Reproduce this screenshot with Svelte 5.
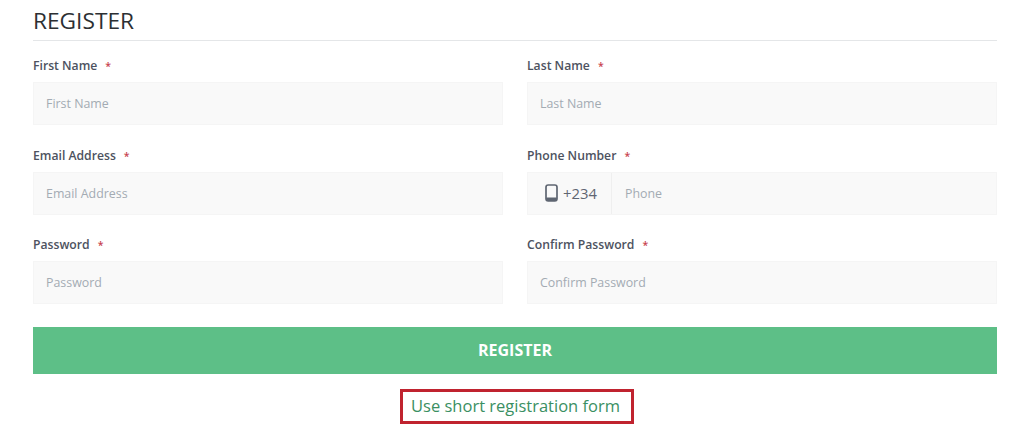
<script>
  const fields = [
    { label: 'First Name', placeholder: 'First Name' },
    { label: 'Last Name', placeholder: 'Last Name' },
    { label: 'Email Address', placeholder: 'Email Address' },
    { label: 'Phone Number', placeholder: 'Phone', phone: true },
    { label: 'Password', placeholder: 'Password' },
    { label: 'Confirm Password', placeholder: 'Confirm Password' }
  ];
</script>

<main class="page">
  <h1 class="title">REGISTER</h1>
  <form class="grid">
    {#each fields as f}
      <div class="field">
        <div class="label">{f.label}<span class="req">*</span></div>
        <div class="input">
          {#if f.phone}
            <div class="prefix">
              <svg width="13" height="18" viewBox="0 0 13 18" aria-hidden="true">
                <rect x="1" y="1" width="11" height="16" rx="2.2" fill="none" stroke="#5f6672" stroke-width="1.7" />
                <rect x="1" y="13.6" width="11" height="3.4" rx="1" fill="#5f6672" />
              </svg>
              <span>+234</span>
            </div>
          {/if}
          <span class="ph">{f.placeholder}</span>
        </div>
      </div>
    {/each}
  </form>
  <button class="submit" type="button">REGISTER</button>
  <div class="linkrow"><span class="link">Use short registration form</span></div>
</main>

<style>
  :global(body) {
    margin: 0;
    background: #fff;
  }
  .page {
    width: 964px;
    height: 437px;
    margin-left: 33px;
    font-family: "Open Sans", "Liberation Sans", sans-serif;
    overflow: hidden;
  }
  .title {
    margin: 0;
    height: 36px;
    padding-top: 4px;
    border-bottom: 1px solid #e4e6e8;
    font-size: 22.7px;
    line-height: 33px;
    font-weight: 400;
    color: #2c2f33;
  }
  .grid {
    display: grid;
    grid-template-columns: 470px 470px;
    column-gap: 24px;
    row-gap: 19.5px;
    margin-top: 14px;
  }
  .label {
    height: 27px;
    font-size: 12.2px;
    line-height: 22px;
    font-weight: 600;
    color: #4d5260;
  }
  .req {
    color: #c8434f;
    margin-left: 8px;
    font-size: 10.5px;
  }
  .input {
    display: flex;
    align-items: center;
    height: 43px;
    background: #f9f9f9;
    border: 1px solid #f5f5f5;
    box-sizing: border-box;
    padding-left: 12px;
    font-size: 12.4px;
    color: #a3abb3;
  }
  .prefix {
    display: flex;
    align-items: center;
    gap: 5px;
    align-self: stretch;
    width: 84px;
    box-sizing: border-box;
    margin-right: 13px;
    margin-left: -12px;
    padding-left: 17px;
    border-right: 1px solid #efefef;
    font-size: 14.8px;
    color: #5f6672;
  }
  .submit {
    display: block;
    width: 100%;
    height: 47px;
    margin: 23px 0 0;
    padding: 0 0 2px;
    border: 0;
    background: #5dbf87;
    color: #fff;
    font-family: inherit;
    font-size: 16px;
    font-weight: 700;
  }
  .linkrow {
    display: flex;
    justify-content: center;
    margin-top: 15px;
    padding-left: 3px;
  }
  .link {
    box-sizing: border-box;
    width: 234px;
    height: 35px;
    padding-right: 2px;
    border: 3px solid #c0232f;
    text-align: center;
    font-size: 16.5px;
    line-height: 28px;
    color: #3a8f62;
  }
</style>
